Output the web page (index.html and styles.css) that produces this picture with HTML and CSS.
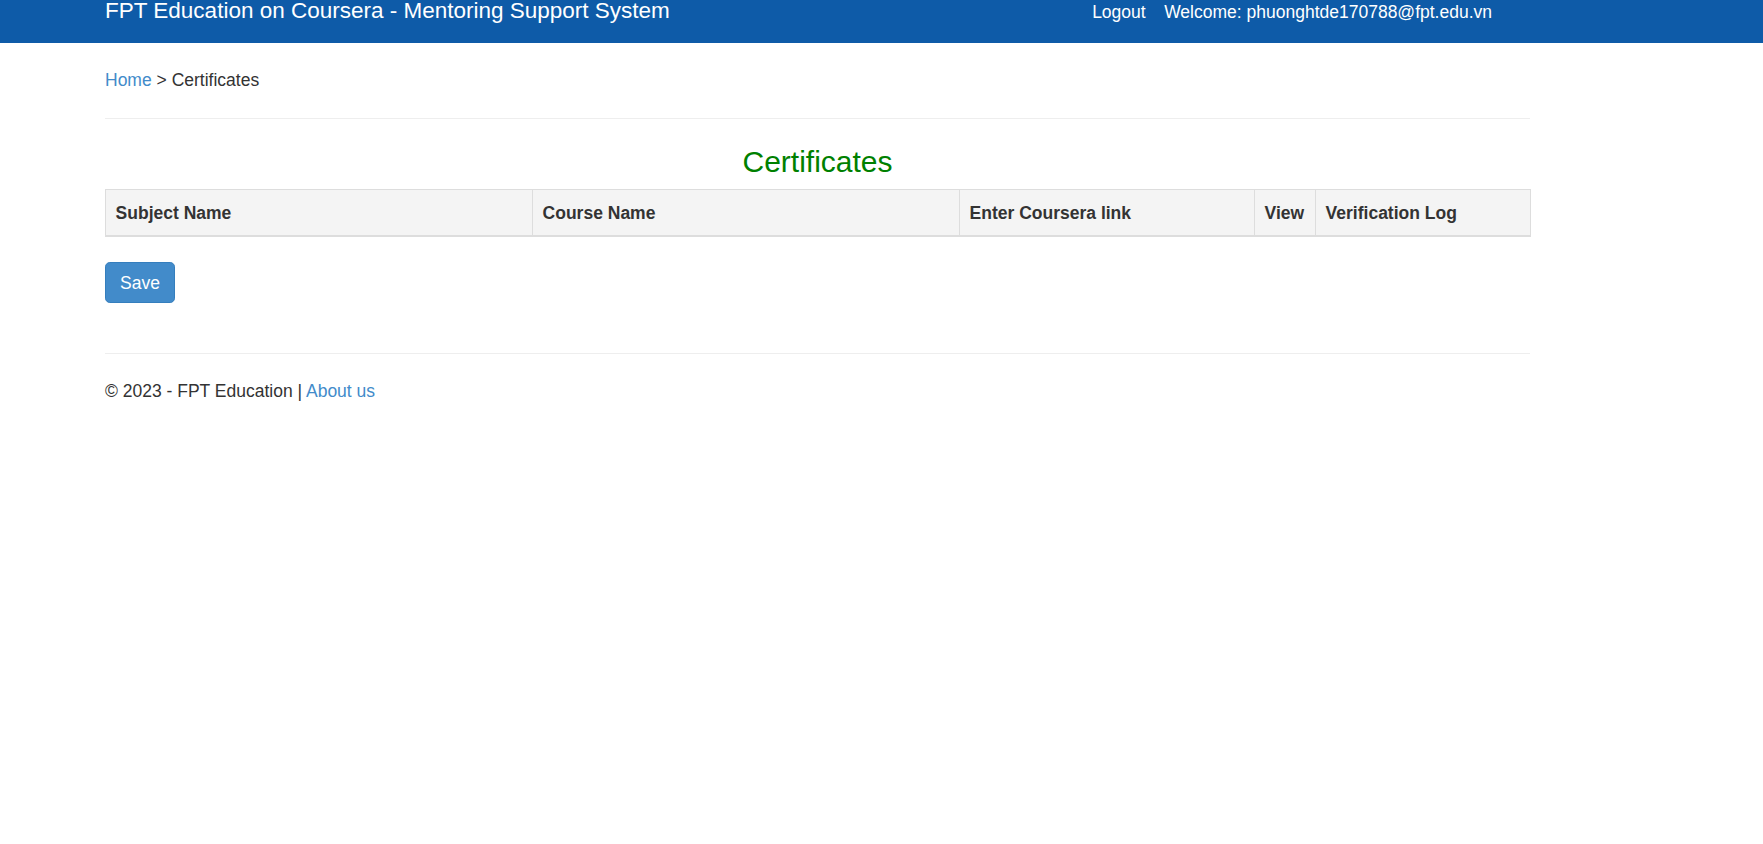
FILE: index.html
```html
<!DOCTYPE html>
<html lang="en">
<head>
<meta charset="utf-8">
<title>Certificates - FPT Education on Coursera</title>
<link rel="stylesheet" href="styles.css">
</head>
<body>
<header class="topbar">
  <div class="topbar-inner">
    <a class="brand" href="#">FPT Education on Coursera - Mentoring Support System</a>
    <nav class="topnav">
      <a class="topnav-link" href="#">Logout</a>
      <span class="topnav-text">Welcome: phuonghtde170788@fpt.edu.vn</span>
    </nav>
  </div>
</header>
<main class="page">
  <div class="breadcrumb"><a class="link" href="#">Home</a> &gt; Certificates</div>
  <hr class="rule rule-top">
  <h3 class="title">Certificates</h3>
  <table class="grid">
    <colgroup>
      <col class="c-subject">
      <col class="c-course">
      <col class="c-link">
      <col class="c-view">
      <col class="c-log">
    </colgroup>
    <thead>
      <tr>
        <th>Subject Name</th>
        <th>Course Name</th>
        <th>Enter Coursera link</th>
        <th>View</th>
        <th>Verification Log</th>
      </tr>
    </thead>
    <tbody></tbody>
  </table>
  <button class="btn-save" type="button">Save</button>
  <hr class="rule rule-foot">
  <footer class="foot">© 2023 - FPT Education | <a class="link" href="#">About us</a></footer>
</main>
</body>
</html>
```
FILE: styles.css
```css
* { box-sizing: border-box; }
html, body { margin: 0; padding: 0; }
body {
  font-family: "Liberation Sans", Arial, sans-serif;
  font-size: 17.5px;
  line-height: 24px;
  color: #333;
  background: #fff;
}
a { text-decoration: none; }
.link { color: #428bca; }

.topbar {
  background: #0e5ba8;
  height: 43px;
}
.topbar-inner {
  display: flex;
  justify-content: space-between;
  align-items: flex-start;
  padding-left: 105px;
  padding-right: 271px;
}
.brand {
  color: #fff;
  font-size: 22.5px;
  line-height: 20px;
  padding-top: 1px;
}
.topnav {
  display: flex;
  gap: 18.5px;
  padding-top: 2px;
  line-height: 20px;
  color: #fff;
}
.topnav-link { color: #fff; }
.topnav-text { color: #fff; }

.page {
  width: 1425px;
  margin-left: 105px;
}
.breadcrumb {
  margin-top: 25px;
}
.rule {
  border: 0;
  border-top: 1px solid #eee;
  height: 0;
  margin: 0;
}
.rule-top { margin-top: 26px; }
.title {
  margin: 27px 0 11px;
  font-size: 30px;
  font-weight: 400;
  line-height: 31.7px;
  color: #008000;
  text-align: center;
}
.grid {
  width: 100%;
  table-layout: fixed;
  border-collapse: collapse;
  border: 1px solid #ddd;
  margin-bottom: 25px;
}
.c-subject { width: 427px; }
.c-course { width: 427px; }
.c-link { width: 295px; }
.c-view { width: 61px; }
.c-log { width: 215px; }
.grid th {
  background: #f4f4f4;
  text-align: left;
  font-weight: 700;
  padding: 11px 9.6px 10.6px;
  border: 1px solid #ddd;
  border-bottom: 2.4px solid #ddd;
  white-space: nowrap;
}
.btn-save {
  display: block;
  font-family: inherit;
  font-size: 17.5px;
  line-height: 24px;
  color: #fff;
  background: #428bca;
  border: 1.2px solid #357ebd;
  border-radius: 4.8px;
  padding: 7.6px 14px;
  margin: 0;
  cursor: pointer;
}
.rule-foot { margin-top: 50px; }
.foot {
  margin-top: 24.5px;
}
```
